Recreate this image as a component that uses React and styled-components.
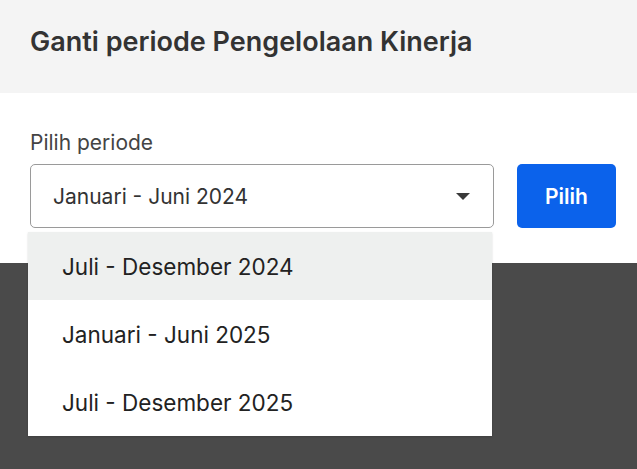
import React from "react";
import styled, { createGlobalStyle } from "styled-components";

const Global = createGlobalStyle`
  html, body { margin: 0; padding: 0; }
  body {
    background: #4a4a4a;
    font-family: Inter, "Noto Sans", sans-serif;
    width: 637px;
    height: 469px;
    overflow: hidden;
  }
`;

const Modal = styled.div`
  width: 637px;
  background: #ffffff;
`;

const Header = styled.div`
  height: 93px;
  background: #f4f4f4;
  display: flex;
  align-items: center;
  padding: 0 30px 10px;
  box-sizing: border-box;
`;

const Title = styled.h2`
  margin: 0;
  font-size: 27px;
  font-weight: 600;
  color: #333333;
`;

const Body = styled.div`
  padding: 37px 21px 35px 30px;
  display: flex;
  flex-direction: column;
  gap: 8px;
`;

const Label = styled.label`
  font-size: 21px;
  line-height: 26px;
  color: #444444;
`;

const Row = styled.div`
  display: flex;
  gap: 23px;
  align-items: stretch;
`;

const SelectWrap = styled.div`
  position: relative;
  flex: 0 0 464px;
`;

const SelectBox = styled.div`
  height: 64px;
  box-sizing: border-box;
  border: 1px solid #9a9a9a;
  border-radius: 5px;
  display: flex;
  align-items: center;
  justify-content: space-between;
  padding: 0 23px 0 22px;
  font-size: 21px;
  color: #333333;
  background: #fff;
`;

const Caret = styled.span`
  width: 0;
  height: 0;
  border-left: 7px solid transparent;
  border-right: 7px solid transparent;
  border-top: 7px solid #3a3a3a;
`;

const Button = styled.button`
  width: 100px;
  height: 64px;
  border: none;
  border-radius: 5px;
  background: #0b62eb;
  color: #ffffff;
  font-family: inherit;
  font-size: 21px;
  font-weight: 600;
  cursor: pointer;
`;

const Menu = styled.ul`
  position: absolute;
  top: 68px;
  left: -2px;
  width: 464px;
  margin: 0;
  padding: 0;
  list-style: none;
  background: #ffffff;
  box-shadow: 0 1px 2px rgba(0, 0, 0, 0.15);
`;

const Item = styled.li`
  height: 68px;
  display: flex;
  align-items: center;
  padding-left: 34px;
  font-size: 22.5px;
  color: #222222;
  background: ${(p) => (p.$active ? "#eef0ef" : "#ffffff")};
`;

const options = ["Juli - Desember 2024", "Januari - Juni 2025", "Juli - Desember 2025"];

export default function App() {
  return (
    <>
      <Global />
      <Modal>
        <Header>
          <Title>Ganti periode Pengelolaan Kinerja</Title>
        </Header>
        <Body>
          <Label>Pilih periode</Label>
          <Row>
            <SelectWrap>
              <SelectBox>
                <span>Januari - Juni 2024</span>
                <Caret />
              </SelectBox>
              <Menu>
                {options.map((o, i) => (
                  <Item key={o} $active={i === 0}>
                    {o}
                  </Item>
                ))}
              </Menu>
            </SelectWrap>
            <Button>Pilih</Button>
          </Row>
        </Body>
      </Modal>
    </>
  );
}
